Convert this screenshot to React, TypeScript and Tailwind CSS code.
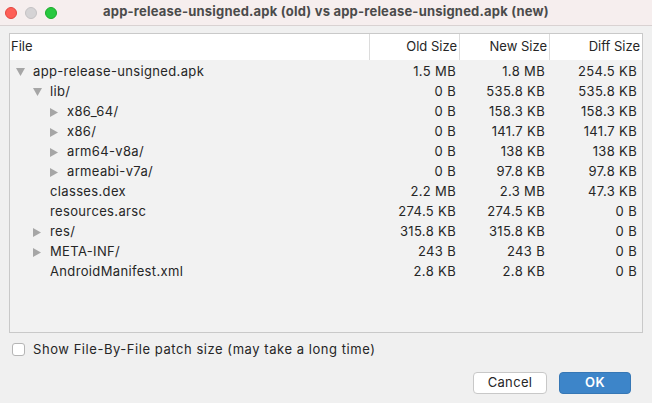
import React, { FC } from "react";

interface Row {
  name: string;
  depth: number;
  arrow: "down" | "right" | null;
  oldSize: string;
  newSize: string;
  diffSize: string;
}

const rows: Row[] = [
  { name: "app-release-unsigned.apk", depth: 0, arrow: "down", oldSize: "1.5 MB", newSize: "1.8 MB", diffSize: "254.5 KB" },
  { name: "lib/", depth: 1, arrow: "down", oldSize: "0 B", newSize: "535.8 KB", diffSize: "535.8 KB" },
  { name: "x86_64/", depth: 2, arrow: "right", oldSize: "0 B", newSize: "158.3 KB", diffSize: "158.3 KB" },
  { name: "x86/", depth: 2, arrow: "right", oldSize: "0 B", newSize: "141.7 KB", diffSize: "141.7 KB" },
  { name: "arm64-v8a/", depth: 2, arrow: "right", oldSize: "0 B", newSize: "138 KB", diffSize: "138 KB" },
  { name: "armeabi-v7a/", depth: 2, arrow: "right", oldSize: "0 B", newSize: "97.8 KB", diffSize: "97.8 KB" },
  { name: "classes.dex", depth: 1, arrow: null, oldSize: "2.2 MB", newSize: "2.3 MB", diffSize: "47.3 KB" },
  { name: "resources.arsc", depth: 1, arrow: null, oldSize: "274.5 KB", newSize: "274.5 KB", diffSize: "0 B" },
  { name: "res/", depth: 1, arrow: "right", oldSize: "315.8 KB", newSize: "315.8 KB", diffSize: "0 B" },
  { name: "META-INF/", depth: 1, arrow: "right", oldSize: "243 B", newSize: "243 B", diffSize: "0 B" },
  { name: "AndroidManifest.xml", depth: 1, arrow: null, oldSize: "2.8 KB", newSize: "2.8 KB", diffSize: "0 B" },
];

const indent = ["pl-[6px]", "pl-[23px]", "pl-[40px]"];

const Arrow: FC<{ dir: "down" | "right" | null }> = ({ dir }) => (
  <span className="w-[17px] h-[20px] flex items-center shrink-0">
    {dir === "down" && (
      <svg width="9" height="8" viewBox="0 0 9 8">
        <path d="M0 0 L9 0 L4.5 8 Z" fill="#a6a6a6" />
      </svg>
    )}
    {dir === "right" && (
      <svg width="8" height="9" viewBox="0 0 8 9">
        <path d="M0 0 L8 4.5 L0 9 Z" fill="#a6a6a6" />
      </svg>
    )}
  </span>
);

const App: FC = () => {
  return (
    <div
      className="w-[652px] h-[403px] bg-[#f0f0f0] flex flex-col text-[13px] text-[#262626] tracking-[0.35px] overflow-hidden"
      style={{ fontFamily: "Inter, 'Liberation Sans', sans-serif" }}
    >
      <div className="h-[26px] shrink-0 bg-[#f6eeee] border-b border-[#d9d2d2] flex items-center relative">
        <div className="flex items-center gap-[8px] pl-[5px]">
          <span className="w-[12px] h-[12px] rounded-full bg-[#fe5f57] border border-[#e2463f]" />
          <span className="w-[12px] h-[12px] rounded-full bg-[#d5d3d5] border border-[#c4c2c4]" />
          <span className="w-[12px] h-[12px] rounded-full bg-[#28c840] border border-[#1aab29]" />
        </div>
        <div className="absolute inset-0 flex items-center justify-center font-bold text-[#4b4b4b] text-[13px] tracking-[0.2px] pb-[2px]">
          app-release-unsigned.apk (old) vs app-release-unsigned.apk (new)
        </div>
      </div>

      <div className="mx-[9px] mt-[7px] h-[300px] border border-[#c9c9c9] bg-[#f2f2f2] flex flex-col">
        <div className="h-[26px] bg-white flex items-center shrink-0 tracking-normal">
          <div className="w-[360px] pl-[1px] h-full flex items-center border-r border-[#dcdcdc]">File</div>
          <div className="w-[90px] pr-[2px] h-full flex items-center justify-end border-r border-[#dcdcdc]">Old Size</div>
          <div className="w-[90px] pr-[2px] h-full flex items-center justify-end border-r border-[#dcdcdc]">New Size</div>
          <div className="flex-1 pr-[2px] h-full flex items-center justify-end">Diff Size</div>
        </div>
        <div className="pt-[2px]">
          {rows.map((r) => (
            <div key={r.name} className="h-[20px] flex items-center">
              <div className={`w-[360px] flex items-center ${indent[r.depth]}`}>
                <Arrow dir={r.arrow} />
                <span>{r.name}</span>
              </div>
              <div className="w-[90px] text-right pr-[4px]">{r.oldSize}</div>
              <div className="w-[90px] text-right pr-[5px]">{r.newSize}</div>
              <div className="flex-1 text-right pr-[5px]">{r.diffSize}</div>
            </div>
          ))}
        </div>
      </div>

      <label className="flex items-center mt-[7px] ml-[12px] gap-[8px]">
        <span className="w-[13px] h-[13px] bg-white border border-[#b5b5b5] rounded-[3px] shrink-0" />
        <span className="tracking-[0.55px]">Show File-By-File patch size (may take a long time)</span>
      </label>

      <div className="flex justify-end gap-[12px] mr-[21px] mt-[12px]">
        <button className="w-[74px] h-[22px] bg-white border border-[#c8c8c8] rounded-[4px] text-[13px] text-[#262626]">
          Cancel
        </button>
        <button className="w-[72px] h-[22px] bg-[#3d85c9] border border-[#3677b5] rounded-[4px] text-[13px] text-white font-semibold">
          OK
        </button>
      </div>
    </div>
  );
};

export default App;
